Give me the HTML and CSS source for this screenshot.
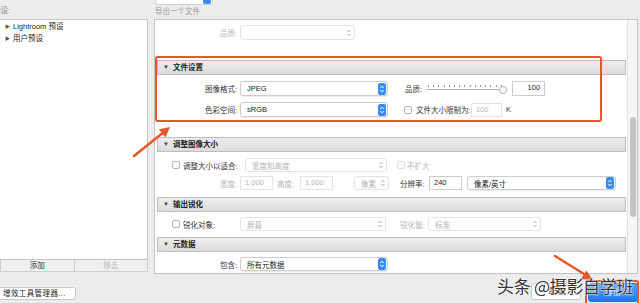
FILE: index.html
```html
<!DOCTYPE html>
<html lang="zh">
<head>
  <meta charset="UTF-8" />
  <title>导出</title>
  <link rel="stylesheet" href="styles.css">
</head>
<body>
  <div class="dialog">
    <div class="side">
      <div class="side-label">预设:</div>
      <div class="preset-list">
        <div class="preset"><span class="tri">▶</span>Lightroom 预设</div>
        <div class="preset"><span class="tri">▶</span>用户预设</div>
      </div>
      <div class="list-buttons">
        <div class="list-btn">添加</div>
        <div class="list-btn off">移去</div>
      </div>
      <div class="plugin-btn">增效工具管理器...</div>
    </div>

    <div class="main">
      <div class="top-select"><svg class="step" viewBox="0 0 8 12"><rect width="8" height="12" rx="2" fill="#3b8df5"/></svg></div>
      <div class="main-label">导出一个文件</div>

      <div class="panel">
        <div class="content">
          <div class="body body-top">
            <div class="row">
              <span class="lbl off">品质:</span>
              <div class="sel off sel-quality"><span></span><svg class="step" viewBox="0 0 8 12"><path d="M2.5 5L4 3.5 5.5 5M2.5 7L4 8.5 5.5 7" stroke="#aaa" fill="none"/></svg></div>
            </div>
          </div>

          <div class="head"><span class="arrow">▼</span>文件设置</div>
          <div class="body body-file">
            <div class="row">
              <span class="lbl">图像格式:</span>
              <div class="sel sel-main"><span>JPEG</span><svg class="step" viewBox="0 0 8 12"><rect width="8" height="12" rx="2" fill="#3b8df5"/><path d="M2.3 5L4 3.2 5.7 5M2.3 7L4 8.8 5.7 7" stroke="#fff" fill="none"/></svg></div>
              <span class="text quality-lbl">品质:</span>
              <div class="slider"><span class="thumb"></span></div>
              <div class="field field-quality">100</div>
            </div>
            <div class="row row-gap">
              <span class="lbl">色彩空间:</span>
              <div class="sel sel-main"><span>sRGB</span><svg class="step" viewBox="0 0 8 12"><rect width="8" height="12" rx="2" fill="#3b8df5"/><path d="M2.3 5L4 3.2 5.7 5M2.3 7L4 8.8 5.7 7" stroke="#fff" fill="none"/></svg></div>
              <span class="check limit-check"></span>
              <span class="text limit-lbl">文件大小限制为:</span>
              <div class="field field-limit off">100</div>
              <span class="text unit">K</span>
            </div>
          </div>

          <div class="head"><span class="arrow">▼</span>调整图像大小</div>
          <div class="body body-size">
            <div class="row">
              <span class="check-wrap wrap-fit"><span class="check"></span><span class="text">调整大小以适合:</span></span>
              <div class="sel off sel-fit"><span>宽度和高度</span><svg class="step" viewBox="0 0 8 12"><path d="M2.5 5L4 3.5 5.5 5M2.5 7L4 8.5 5.5 7" stroke="#aaa" fill="none"/></svg></div>
              <span class="check off no-enlarge"></span>
              <span class="text off">不扩大</span>
            </div>
            <div class="row row-gap-sm">
              <span class="lbl off">宽度:</span>
              <div class="field field-dim off">1,000</div>
              <span class="text off height-lbl">高度:</span>
              <div class="field field-dim off dim-h">1,000</div>
              <div class="sel off sel-unit"><span>像素</span><svg class="step" viewBox="0 0 8 12"><path d="M2.5 5L4 3.5 5.5 5M2.5 7L4 8.5 5.5 7" stroke="#aaa" fill="none"/></svg></div>
              <span class="text res-lbl">分辨率:</span>
              <div class="field field-res">240</div>
              <div class="sel sel-res"><span>像素/英寸</span><svg class="step" viewBox="0 0 8 12"><rect width="8" height="12" rx="2" fill="#3b8df5"/><path d="M2.3 5L4 3.2 5.7 5M2.3 7L4 8.8 5.7 7" stroke="#fff" fill="none"/></svg></div>
            </div>
          </div>

          <div class="head"><span class="arrow">▼</span>输出锐化</div>
          <div class="body body-sharp">
            <div class="row">
              <span class="check-wrap wrap-sharp"><span class="check"></span><span class="text">锐化对象:</span></span>
              <div class="sel off sel-sharp"><span>屏幕</span><svg class="step" viewBox="0 0 8 12"><path d="M2.5 5L4 3.5 5.5 5M2.5 7L4 8.5 5.5 7" stroke="#aaa" fill="none"/></svg></div>
              <span class="text off amount-lbl">锐化量:</span>
              <div class="sel off sel-amount"><span>标准</span><svg class="step" viewBox="0 0 8 12"><path d="M2.5 5L4 3.5 5.5 5M2.5 7L4 8.5 5.5 7" stroke="#aaa" fill="none"/></svg></div>
            </div>
          </div>

          <div class="head"><span class="arrow">▼</span>元数据</div>
          <div class="body body-meta">
            <div class="row">
              <span class="lbl">包含:</span>
              <div class="sel sel-main"><span>所有元数据</span><svg class="step" viewBox="0 0 8 12"><rect width="8" height="12" rx="2" fill="#3b8df5"/><path d="M2.3 5L4 3.2 5.7 5M2.3 7L4 8.8 5.7 7" stroke="#fff" fill="none"/></svg></div>
            </div>
          </div>
        </div>
        <div class="scrollbar"><span class="scroll-thumb"></span></div>
      </div>

      <div class="actions">
        <div class="btn">取消</div>
        <div class="btn primary">导出</div>
      </div>
    </div>
  </div>

  <div class="mark mark-file"></div>
  <div class="mark mark-export"></div>
  <svg class="arrows" viewBox="0 0 640 303" width="640" height="303">
    <line x1="134" y1="156" x2="162" y2="133.5" stroke="#e8542c" stroke-width="2.5" stroke-linecap="round"/>
    <polygon points="170,127 165.5,137.5 158.8,129.3" fill="#e8542c"/>
    <line x1="555" y1="256" x2="584" y2="274" stroke="#e8542c" stroke-width="2.5" stroke-linecap="round"/>
    <polygon points="593,280 581,279 586.3,270.5" fill="#e8542c"/>
  </svg>
  <div class="watermark">头条 @摄影自学班</div>
</body>
</html>
```

FILE: styles.css
```css
* {
  box-sizing: border-box;
}

body {
  margin: 0;
  width: 640px;
  height: 303px;
  overflow: hidden;
  position: relative;
  background: #ececec;
  color: #222;
  font-family: 'Liberation Sans', 'Noto Sans CJK SC', sans-serif;
  font-size: 7.5px;
}

.dialog {
  display: flex;
  gap: 6px;
}

/* left column */
.side {
  width: 148px;
  display: flex;
  flex-direction: column;
}

.side-label {
  height: 19px;
  line-height: 22px;
  margin-left: -7px;
  color: #8a8a8a;
}

.preset-list {
  height: 241px;
  background: #fff;
  border: 1px solid #c6c6c6;
  border-left: none;
}

.preset {
  height: 12px;
  line-height: 12px;
  padding-left: 5px;
  color: #222;
}

.tri {
  font-size: 5px;
  color: #555;
  margin-right: 3px;
  vertical-align: 1px;
}

.list-buttons {
  display: flex;
  height: 12px;
}

.list-btn {
  flex: 1;
  text-align: center;
  line-height: 11px;
  background: #f0f0f0;
  border: 1px solid #cfcfcf;
  border-top: none;
  color: #333;
}

.list-btn + .list-btn {
  border-left: none;
}

.list-btn.off {
  color: #bcbcbc;
}

.plugin-btn {
  margin-top: 15px;
  width: 76px;
  height: 13px;
  line-height: 12px;
  padding-left: 3px;
  background: #fff;
  border: 1px solid #c9c9c9;
  border-left: none;
  border-radius: 0 3px 3px 0;
  letter-spacing: 0.4px;
  color: #222;
}

/* right column */
.main {
  width: 484px;
  display: flex;
  flex-direction: column;
}

.top-select {
  width: 58px;
  height: 15px;
  margin: -10px 0 0 1px;
  background: #fff;
  border: 1px solid #cfcfcf;
  border-radius: 3px;
  display: flex;
  justify-content: flex-end;
  align-items: center;
  padding-right: 1px;
}

.main-label {
  height: 14px;
  line-height: 14px;
  padding-left: 1px;
  color: #9a9a9a;
}

.panel {
  height: 255px;
  display: flex;
  border: 1px solid #c4c4c4;
  background: #fff;
}

.content {
  flex: 1;
  overflow: hidden;
}

.scrollbar {
  width: 10px;
  background: #f6f6f6;
  border-left: 1px solid #e2e2e2;
  position: relative;
}

.scroll-thumb {
  position: absolute;
  left: 2px;
  top: 97px;
  width: 6px;
  height: 100px;
  border-radius: 3px;
  background: #c3c3c3;
}

.head {
  height: 15px;
  margin: 0 1px 0 2px;
  line-height: 13px;
  padding-left: 5px;
  border: 1px solid #bdbdbd;
  background: linear-gradient(#ededed, #dcdcdc);
  font-weight: bold;
  color: #222;
}

.arrow {
  font-size: 6px;
  color: #444;
  margin-right: 4px;
  vertical-align: 1px;
}

.body-top { height: 40px; padding-top: 5px; }
.body-file { height: 62px; padding-top: 6px; }
.body-size { height: 45px; padding-top: 6px; }
.body-sharp { height: 25px; padding-top: 5px; }
.body-meta { height: 21px; padding-top: 5px; }

.row {
  display: flex;
  align-items: center;
  height: 14px;
}

.body-top .row,
.body-file .row {
  height: 15px;
}

.row-gap { margin-top: 6px; }
.row-gap-sm { margin-top: 4px; }

.lbl {
  width: 85px;
  padding-right: 3px;
  text-align: right;
  color: #333;
}

.text {
  color: #333;
  white-space: nowrap;
}

.off,
.text.off {
  color: #b5b5b5;
}

.sel {
  height: 14px;
  display: flex;
  align-items: center;
  justify-content: space-between;
  padding: 0 1px 0 6px;
  background: #fff;
  border: 1px solid #cdcdcd;
  border-radius: 3px;
  box-shadow: 0 0.5px 1px rgba(0, 0, 0, 0.08);
  color: #222;
}

.sel.off {
  border-color: #e3e3e3;
  box-shadow: none;
  color: #b5b5b5;
}

.step {
  width: 8px;
  height: 12px;
  flex: none;
}

.sel-quality { width: 115px; height: 15px; }
.sel-main { width: 148px; height: 15px; }
.body-meta .sel-main { height: 14px; }
.sel-fit { width: 142px; }
.sel-unit { width: 35px; margin-left: 21px; }
.sel-res { width: 149px; margin-left: 5px; }
.sel-sharp { width: 146px; }
.sel-amount { width: 113px; margin-left: 4px; }

.field {
  height: 14px;
  line-height: 12px;
  padding: 0 4px;
  background: #fff;
  border: 1px solid #cdcdcd;
  color: #222;
}

.field.off {
  border-color: #e3e3e3;
  color: #b5b5b5;
}

.field-quality { width: 33px; height: 15px; margin-left: 4px; text-align: right; }
.field-limit { width: 31px; margin-left: 2px; }
.field-dim { width: 33px; }
.dim-h { margin-left: 2px; }
.field-res { width: 33px; margin-left: 3px; }

.quality-lbl { margin-left: 17px; }
.limit-check { margin-left: 16px; }
.limit-lbl { margin-left: 4px; width: 53px; }
.unit { margin-left: 4px; }
.height-lbl { margin-left: 4px; width: 21px; }
.res-lbl { margin-left: 11px; width: 26px; }
.amount-lbl { margin-left: 14px; width: 24px; }
.no-enlarge { margin-left: 10px; margin-right: 2px; }

.slider {
  position: relative;
  width: 82px;
  height: 10px;
  margin-left: 4px;
  background:
    repeating-linear-gradient(90deg, #9a9a9a 0 1px, transparent 1px 5.2px) 2px 1px / 76px 2px no-repeat,
    linear-gradient(#b4b4b4, #b4b4b4) 0 5px / 78px 1px no-repeat;
}

.thumb {
  position: absolute;
  left: 73px;
  top: 2px;
  width: 8px;
  height: 8px;
  border-radius: 50%;
  background: #fff;
  border: 1px solid #b0b0b0;
}

.check {
  width: 8px;
  height: 8px;
  flex: none;
  background: #fff;
  border: 1px solid #b3b3b3;
  border-radius: 2px;
}

.check.off {
  border-color: #dcdcdc;
}

.check-wrap {
  display: flex;
  align-items: center;
  gap: 3px;
  margin-left: 17px;
}

.wrap-fit { width: 73px; }
.wrap-sharp { width: 68px; }

/* dialog buttons */
.actions {
  display: flex;
  justify-content: flex-end;
  align-items: flex-start;
  gap: 7px;
  padding-top: 9px;
}

.btn {
  width: 50px;
  height: 17px;
  line-height: 16px;
  text-align: center;
  background: #fff;
  border: 1px solid #c9c9c9;
  border-radius: 3px;
  color: #444;
}

.btn.primary {
  height: 19px;
  line-height: 18px;
  background: linear-gradient(#5aa2fb, #2374f1);
  border-color: #2f6fd8;
  color: #eaf2ff;
}

/* annotations over the screenshot */
.mark {
  position: absolute;
  border: 2px solid #e8542c;
  border-radius: 3px;
}

.mark-file {
  left: 155px;
  top: 56px;
  width: 447px;
  height: 66px;
}

.mark-export {
  left: 585px;
  top: 280px;
  width: 54px;
  height: 26px;
}

.arrows {
  position: absolute;
  left: 0;
  top: 0;
}

.watermark {
  position: absolute;
  left: 497px;
  top: 275px;
  font-family: 'Noto Sans CJK SC', sans-serif;
  font-size: 17px;
  line-height: 22px;
  letter-spacing: -0.3px;
  color: #333;
  text-shadow: 0 0 2px #fff, 0 0 2px #fff, 0 0 1px #fff;
}
```
